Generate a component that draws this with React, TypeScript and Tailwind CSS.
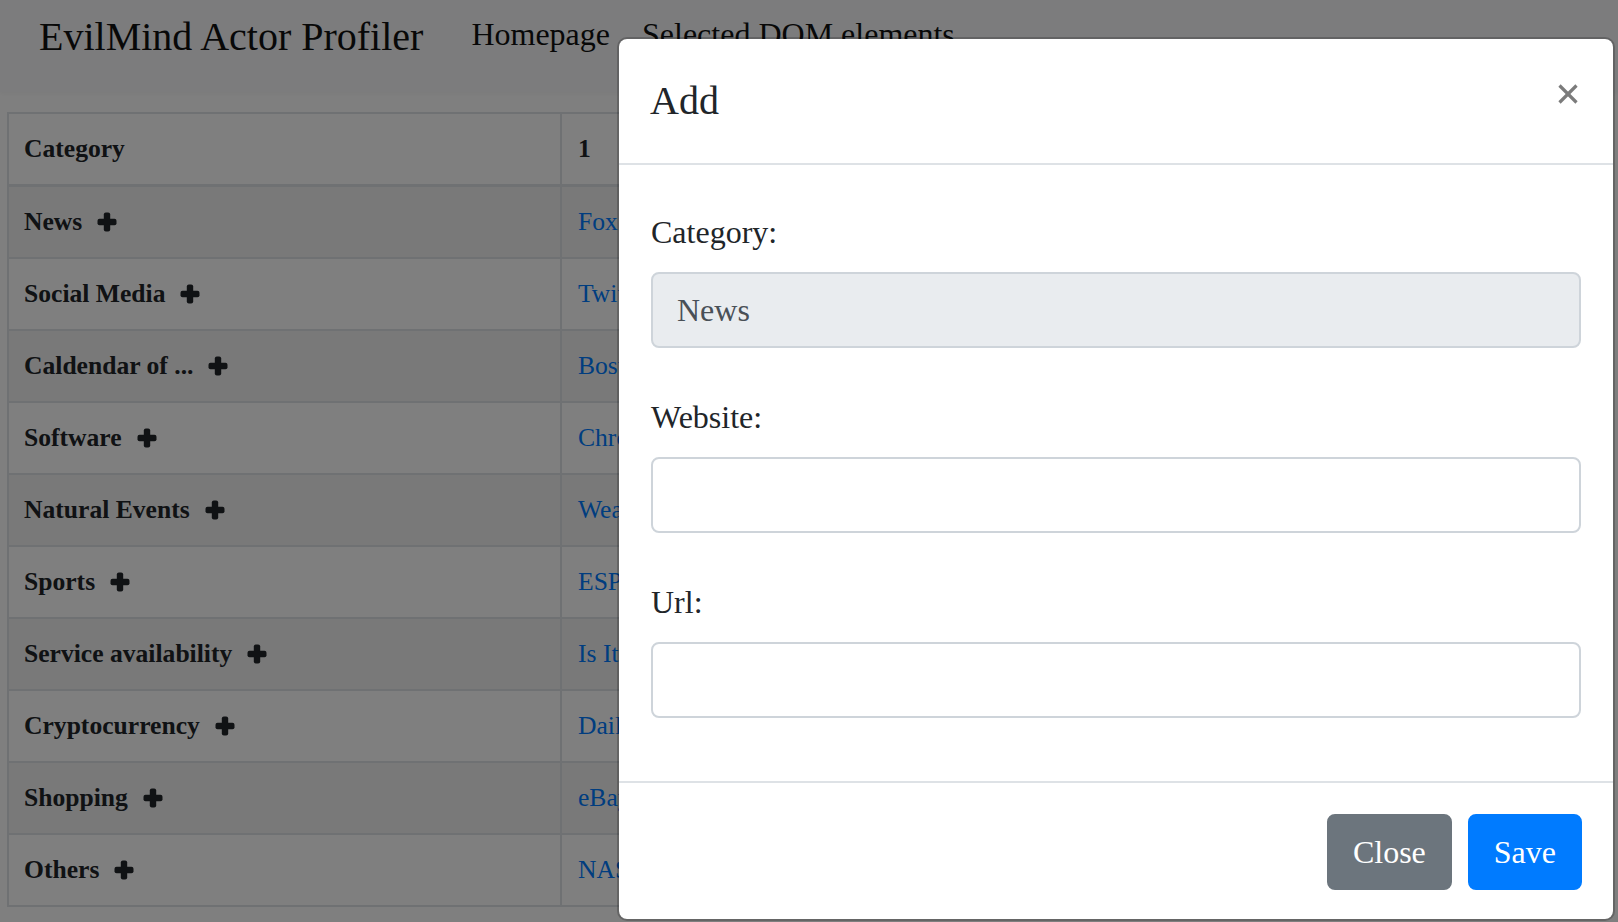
import React from "react";

const rows: [string, string][] = [
  ["News", "Fox News"],
  ["Social Media", "Twitter"],
  ["Caldendar of ...", "Boston Calendar"],
  ["Software", "Chrome Releases"],
  ["Natural Events", "Weather.com"],
  ["Sports", "ESPN"],
  ["Service availability", "Is It Down Right Now"],
  ["Cryptocurrency", "Daily Bitcoin"],
  ["Shopping", "eBay"],
  ["Others", "NASA"],
];

function Plus() {
  return (
    <svg width="20" height="20" viewBox="0 0 20 20" className="ml-[15px] shrink-0">
      <rect x="6.8" y="0.5" width="6.4" height="19" rx="2" fill="#212529" />
      <rect x="0.5" y="6.8" width="19" height="6.4" rx="2" fill="#212529" />
    </svg>
  );
}

function Field({ label, value, readOnly, top }: { label: string; value?: string; readOnly?: boolean; top: string }) {
  return (
    <div className={top}>
      <div className="text-[32px] leading-[48px] text-[#212529]">{label}</div>
      <div
        className={
          "mt-[16px] h-[76px] box-border border-2 border-[#ced4da] rounded-[8px] px-[24px] flex items-center text-[32px] leading-[48px] text-[#495057] " +
          (readOnly ? "bg-[#e9ecef]" : "bg-white")
        }
      >
        {value}
      </div>
    </div>
  );
}

export default function App() {
  return (
    <div className="relative w-[1618px] h-[922px] overflow-hidden bg-white [font-family:'Liberation_Serif','Times_New_Roman',serif] text-[#212529]">
      {/* Navbar */}
      <div className="h-[92px] bg-[#f8f9fa] px-[39px] flex items-start shadow-[0_2px_4px_rgba(0,0,0,0.04)]">
        <div className="text-[40px] leading-[60px] mt-[7px] mr-[32px] text-[#111]">EvilMind Actor Profiler</div>
        <div className="flex mt-[10px] text-[32px] leading-[48px] text-[#111]">
          <div className="px-[16px]">Homepage</div>
          <div className="px-[16px]">Selected DOM elements</div>
        </div>
      </div>

      {/* Table */}
      <div className="mx-[7px] mt-[20px] border-x-2 border-t-2 border-[#dee2e6] text-[25.6px] leading-[38.4px]">
        <div className="flex h-[73px] box-border border-b-[3px] border-[#dee2e6] font-bold">
          <div className="w-[553px] box-border border-r-2 border-[#dee2e6] pl-[15px] flex items-center">Category</div>
          <div className="flex-1 pl-[16px] flex items-center">1</div>
        </div>
        {rows.map(([cat, link], i) => (
          <div
            key={cat}
            className={
              "flex h-[72px] box-border border-b-2 border-[#dee2e6] " + (i % 2 === 0 ? "bg-[#f2f2f2]" : "bg-white")
            }
          >
            <div className="w-[553px] box-border border-r-2 border-[#dee2e6] pl-[15px] flex items-center font-bold">
              <span>{cat}</span>
              <Plus />
            </div>
            <div className="flex-1 pl-[16px] flex items-center text-[#007bff]">{link}</div>
          </div>
        ))}
      </div>

      {/* Backdrop */}
      <div className="absolute inset-0 bg-[rgba(0,0,0,0.5)]" />

      {/* Modal */}
      <div className="absolute left-[617px] top-[37px] w-[998px] box-border bg-white bg-clip-padding border-2 border-[rgba(0,0,0,0.2)] rounded-[10px] flex flex-col">
        <div className="h-[126px] box-border border-b-2 border-[#dee2e6] pt-[32px] pl-[31px] pr-[35px] flex items-start justify-between">
          <div className="text-[40px] leading-[60px] text-[#212529]">Add</div>
          <svg width="20" height="20" viewBox="0 0 20 20" className="mt-[13px]">
            <line x1="1.5" y1="1.5" x2="18.5" y2="18.5" stroke="#7b7b7b" strokeWidth="3.2" />
            <line x1="18.5" y1="1.5" x2="1.5" y2="18.5" stroke="#7b7b7b" strokeWidth="3.2" />
          </svg>
        </div>
        <div className="px-[32px] pt-[43px] pb-[63px]">
          <Field label="Category:" value="News" readOnly top="" />
          <Field label="Website:" top="mt-[45px]" />
          <Field label="Url:" top="mt-[45px]" />
        </div>
        <div className="border-t-2 border-[#dee2e6] pt-[31px] pb-[29px] pr-[31px] flex justify-end gap-[16px]">
          <div className="h-[76px] box-border px-[24px] border-2 border-[#6c757d] bg-[#6c757d] rounded-[8px] text-white text-[32px] leading-[48px] flex items-center">
            Close
          </div>
          <div className="h-[76px] box-border px-[24px] border-2 border-[#007bff] bg-[#007bff] rounded-[8px] text-white text-[32px] leading-[48px] flex items-center">
            Save
          </div>
        </div>
      </div>
    </div>
  );
}
